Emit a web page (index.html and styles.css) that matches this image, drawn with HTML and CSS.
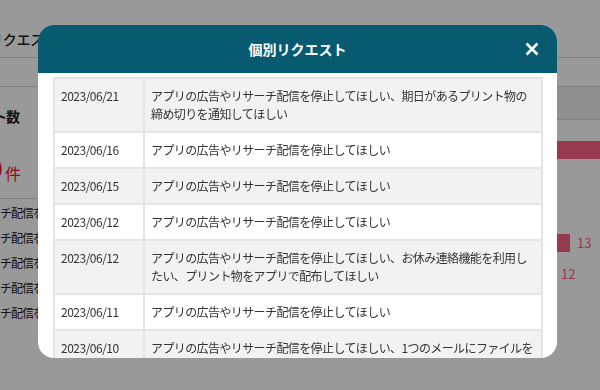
FILE: index.html
```html
<!DOCTYPE html>
<html lang="ja">
<head>
    <meta charset="utf-8">
    <link rel="stylesheet" href="styles.css">
</head>
<body>
    <div class="page">
        <div class="page-head">
            <h1 class="page-title">リクエスト</h1>
        </div>
        <div class="tab-bar"></div>

        <div class="content">
            <section class="summary">
                <h2 class="summary-title">リクエスト数</h2>
                <p class="summary-count"><span class="count-num">169</span>件</p>
                <ul class="request-list">
                    <li>アプリの広告やリサーチ配信を停止</li>
                    <li>アプリの広告やリサーチ配信を停止</li>
                    <li>アプリの広告やリサーチ配信を停止</li>
                    <li>アプリの広告やリサーチ配信を停止</li>
                    <li>アプリの広告やリサーチ配信を停止</li>
                </ul>
            </section>

            <section class="chart">
                <div class="chart-head"></div>
                <ul class="bar-list">
                    <li class="bar-row"><span class="bar-name">広告・リサーチ配信の停止</span><span class="bar" style="width: 480px"></span><span class="bar-value">30</span></li>
                    <li class="bar-row"><span class="bar-name">プリント物の配布</span><span class="bar" style="width: 160px"></span><span class="bar-value">10</span></li>
                    <li class="bar-row"><span class="bar-name">締め切りの通知</span><span class="bar" style="width: 144px"></span><span class="bar-value">9</span></li>
                    <li class="bar-row"><span class="bar-name">お休み連絡</span><span class="bar" style="width: 208px"></span><span class="bar-value">13</span></li>
                    <li class="bar-row"><span class="bar-name">ファイル添付</span><span class="bar" style="width: 192px"></span><span class="bar-value">12</span></li>
                    <li class="bar-row"><span class="bar-name">その他</span><span class="bar" style="width: 128px"></span><span class="bar-value">8</span></li>
                </ul>
            </section>
        </div>
    </div>

    <!-- 個別リクエスト モーダル -->
    <div class="overlay">
        <div class="modal">
            <div class="modal-head">
                <h3 class="modal-title">個別リクエスト</h3>
                <button class="modal-close" aria-label="閉じる">
                    <svg width="14" height="14" viewBox="0 0 14 14">
                        <path d="M1.5 1.5L12.5 12.5M12.5 1.5L1.5 12.5" stroke="#fff" stroke-width="2.6" fill="none"/>
                    </svg>
                </button>
            </div>
            <div class="modal-body">
                <table class="request-table">
                    <tr>
                        <td class="date">2023/06/21</td>
                        <td>アプリの広告やリサーチ配信を停止してほしい、期日があるプリント物の締め切りを通知してほしい</td>
                    </tr>
                    <tr>
                        <td class="date">2023/06/16</td>
                        <td>アプリの広告やリサーチ配信を停止してほしい</td>
                    </tr>
                    <tr>
                        <td class="date">2023/06/15</td>
                        <td>アプリの広告やリサーチ配信を停止してほしい</td>
                    </tr>
                    <tr>
                        <td class="date">2023/06/12</td>
                        <td>アプリの広告やリサーチ配信を停止してほしい</td>
                    </tr>
                    <tr>
                        <td class="date">2023/06/12</td>
                        <td>アプリの広告やリサーチ配信を停止してほしい、お休み連絡機能を利用したい、プリント物をアプリで配布してほしい</td>
                    </tr>
                    <tr>
                        <td class="date">2023/06/11</td>
                        <td>アプリの広告やリサーチ配信を停止してほしい</td>
                    </tr>
                    <tr>
                        <td class="date">2023/06/10</td>
                        <td>アプリの広告やリサーチ配信を停止してほしい、1つのメールにファイルを複数添付できるようにしてほしい</td>
                    </tr>
                </table>
            </div>
        </div>
    </div>
</body>
</html>
```

FILE: styles.css
```css
* {
    box-sizing: border-box;
}

body {
    margin: 0;
    font-family: "Noto Sans CJK JP", "Noto Sans", sans-serif;
    color: #222;
    background: #fff;
    overflow: hidden;
}

/* 背景のページ */
.page {
    width: 600px;
    height: 390px;
    overflow: hidden;
}

.page-head {
    height: 58px;
    padding-top: 29px;
    border-bottom: 1px solid #d6d6d6;
}

.page-title {
    margin: 0 0 0 -11px;
    font-size: 14px;
    line-height: 20px;
    font-weight: 500;
    letter-spacing: -0.3px;
}

.tab-bar {
    height: 29px;
    border-bottom: 1px solid #d6d6d6;
}

.content {
    display: flex;
}

.summary {
    flex: none;
    width: 160px;
    margin-left: -122px;
}

.summary-title {
    margin: 0;
    padding: 19px 19px 0 0;
    font-size: 14px;
    line-height: 20px;
    font-weight: 700;
    letter-spacing: -1px;
    text-align: right;
}

.summary-count {
    margin: 26px 0 0;
    padding: 0 17px 9px 0;
    font-size: 16px;
    line-height: 32px;
    color: #e8182f;
    text-align: right;
    border-bottom: 1px solid #d6d6d6;
}

.count-num {
    font-size: 28px;
    font-weight: 700;
    margin-right: 2px;
}

.request-list {
    list-style: none;
    margin: 0;
    padding: 1px 0 0 12px;
}

.request-list li {
    height: 25px;
    line-height: 25px;
    font-size: 12px;
    white-space: nowrap;
    letter-spacing: -1px;
}

.chart {
    flex: 1;
}

.chart-head {
    height: 33px;
    background: #eee;
    border-bottom: 1px solid #d6d6d6;
}

.bar-list {
    list-style: none;
    margin: 0;
    padding: 14px 0 0;
}

.bar-row {
    display: flex;
    align-items: center;
    height: 31px;
    white-space: nowrap;
}

.bar-name {
    flex: none;
    width: 324px;
    font-size: 12px;
}

.bar {
    flex: none;
    height: 18px;
    background: #fc6184;
}

.bar-value {
    margin-left: 7px;
    font-size: 13px;
    color: #fc6184;
}

/* モーダル */
.overlay {
    position: fixed;
    inset: 0;
    display: flex;
    padding: 25px 43px 32px 38px;
    background: rgba(0, 0, 0, 0.4);
}

.modal {
    flex: 1;
    display: flex;
    flex-direction: column;
    background: #fff;
    border-radius: 16px;
    overflow: hidden;
}

.modal-head {
    position: relative;
    flex: none;
    height: 48px;
    display: flex;
    align-items: center;
    justify-content: center;
    background: #075a70;
}

.modal-title {
    margin: 0;
    font-size: 14px;
    font-weight: 700;
    color: #fff;
}

.modal-close {
    position: absolute;
    top: 17px;
    right: 18px;
    width: 14px;
    height: 14px;
    padding: 0;
    border: none;
    background: none;
    cursor: pointer;
    line-height: 0;
}

.modal-body {
    flex: 1;
    overflow: hidden;
    padding: 4px 14px 0 15px;
}

.request-table {
    width: 100%;
    border-collapse: collapse;
    font-size: 12px;
    line-height: 18px;
    color: #333;
}

.request-table td {
    padding: 8px 4px 8px 6px;
    border: 2px solid #e4e4e4;
    vertical-align: top;
    letter-spacing: -0.6px;
}

.request-table tr:nth-child(odd) {
    background: #f2f2f2;
}

.request-table .date {
    width: 90px;
    letter-spacing: -0.5px;
}
```
